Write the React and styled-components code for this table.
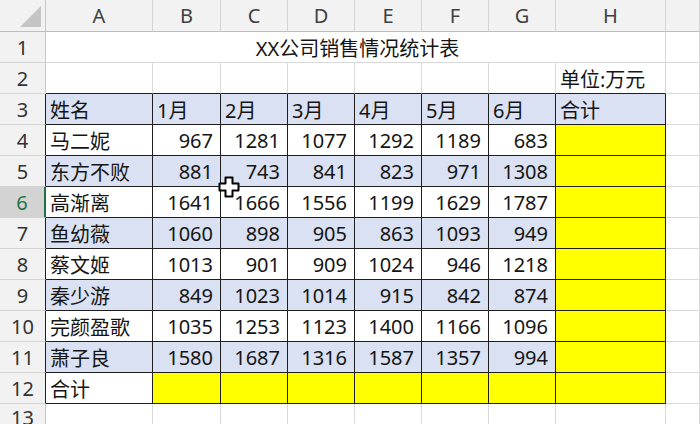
import React from 'react';
import styled, { createGlobalStyle } from 'styled-components';

const GlobalStyle = createGlobalStyle`
  html, body {
    margin: 0;
    padding: 0;
    background: #ffffff;
  }
  body {
    font-family: "Noto Sans", "Noto Sans CJK SC", sans-serif;
  }
`

const GRID = '#d9d9d9';
const EDGE = '#1f1f1f';
const BLUE = '#d9e1f2';
const YELLOW = '#ffff00';

const Sheet = styled.div`
  position: relative;
  width: 700px;
  height: 424px;
  overflow: hidden;
  display: grid;
  grid-template-columns: 46px 107px 68px 67px 67px 67px 67px 67px 110px 1fr;
  grid-template-rows: 32px repeat(12, 31px) 1fr;
  color: #222;
  font-size: 20px;
`

const Corner = styled.div`
  position: relative;
  background: #f2f2f2;
  border-right: 1px solid #c6c6c6;
  border-bottom: 1px solid #bdbdbd;
  box-sizing: border-box;
`

const CornerTriangle = styled.div`
  position: absolute;
  right: 4px;
  bottom: 4px;
  width: 0;
  height: 0;
  border-left: 21px solid transparent;
  border-bottom: 21px solid #c4c4c4;
`

const ColHeader = styled.div`
  display: flex;
  align-items: center;
  justify-content: center;
  background: #f2f2f2;
  color: #404040;
  border-right: 1px solid #d4d4d4;
  border-bottom: 1px solid #bdbdbd;
  box-sizing: border-box;
`

const RowHeader = styled.div`
  display: flex;
  align-items: center;
  justify-content: center;
  background: ${p => (p.$active ? '#d3d3d3' : '#f2f2f2')};
  color: ${p => (p.$active ? '#217346' : '#333')};
  border-right: ${p => (p.$active ? '2px solid #217346' : `1px solid ${p.$edge ? EDGE : '#c6c6c6'}`)};
  border-bottom: 1px solid #d4d4d4;
  box-sizing: border-box;
`

const Cell = styled.div`
  display: flex;
  align-items: center;
  justify-content: ${p => (p.$right ? 'flex-end' : p.$center ? 'center' : 'flex-start')};
  padding: ${p => (p.$right ? '0 7px 0 0' : '0 0 0 4px')};
  background: ${p => p.$bg || '#ffffff'};
  border-right: 1px solid ${p => (p.$boxed ? EDGE : GRID)};
  border-bottom: 1px solid ${p => (p.$boxed || p.$edgeBottom ? EDGE : GRID)};
  box-sizing: border-box;
  white-space: nowrap;
  grid-column: ${p => (p.$span ? `span ${p.$span}` : 'auto')};
  color: #151515;
`

const Cursor = styled.svg`
  position: absolute;
  left: 218px;
  top: 176px;
  pointer-events: none;
`

const cols = ['A', 'B', 'C', 'D', 'E', 'F', 'G', 'H'];
const months = ['1月', '2月', '3月', '4月', '5月', '6月'];

const people = [
  ['马二妮', 967, 1281, 1077, 1292, 1189, 683],
  ['东方不败', 881, 743, 841, 823, 971, 1308],
  ['高渐离', 1641, 1666, 1556, 1199, 1629, 1787],
  ['鱼幼薇', 1060, 898, 905, 863, 1093, 949],
  ['蔡文姬', 1013, 901, 909, 1024, 946, 1218],
  ['秦少游', 849, 1023, 1014, 915, 842, 874],
  ['完颜盈歌', 1035, 1253, 1123, 1400, 1166, 1096],
  ['萧子良', 1580, 1687, 1316, 1587, 1357, 994],
];

function App() {
  return (
    <>
      <GlobalStyle />
      <Sheet>
        <Corner><CornerTriangle /></Corner>
        {cols.map(c => <ColHeader key={c}>{c}</ColHeader>)}
        <ColHeader />

        <RowHeader>1</RowHeader>
        <Cell $span={8} $center>XX公司销售情况统计表</Cell>
        <Cell />

        <RowHeader>2</RowHeader>
        {cols.map(c => (
          <Cell key={c} $edgeBottom>{c === 'H' ? '单位:万元' : ''}</Cell>
        ))}
        <Cell />

        <RowHeader $edge>3</RowHeader>
        <Cell $boxed $bg={BLUE}>姓名</Cell>
        {months.map(m => <Cell key={m} $boxed $bg={BLUE}>{m}</Cell>)}
        <Cell $boxed $bg={BLUE}>合计</Cell>
        <Cell />

        {people.map((row, i) => {
          const bg = i % 2 === 1 ? BLUE : '#ffffff';
          return (
            <React.Fragment key={row[0]}>
              <RowHeader $edge $active={i === 2}>{i + 4}</RowHeader>
              <Cell $boxed $bg={bg}>{row[0]}</Cell>
              {row.slice(1).map((v, j) => (
                <Cell key={j} $boxed $right $bg={bg}>{v}</Cell>
              ))}
              <Cell $boxed $bg={YELLOW} />
              <Cell />
            </React.Fragment>
          );
        })}

        <RowHeader $edge>12</RowHeader>
        <Cell $boxed>合计</Cell>
        {months.map(m => <Cell key={m} $boxed $bg={YELLOW} />)}
        <Cell $boxed $bg={YELLOW} />
        <Cell />

        <RowHeader>13</RowHeader>
        {cols.map(c => <Cell key={c} />)}
        <Cell />

        <Cursor width="22" height="22" viewBox="0 0 22 22">
          <path
            d="M7.5 1.5h7v6h6v7h-6v6h-7v-6h-6v-7h6z"
            fill="#ffffff"
            stroke="#000000"
            strokeWidth="2"
            strokeLinejoin="round"
          />
        </Cursor>
      </Sheet>
    </>
  );
}

export default App;
